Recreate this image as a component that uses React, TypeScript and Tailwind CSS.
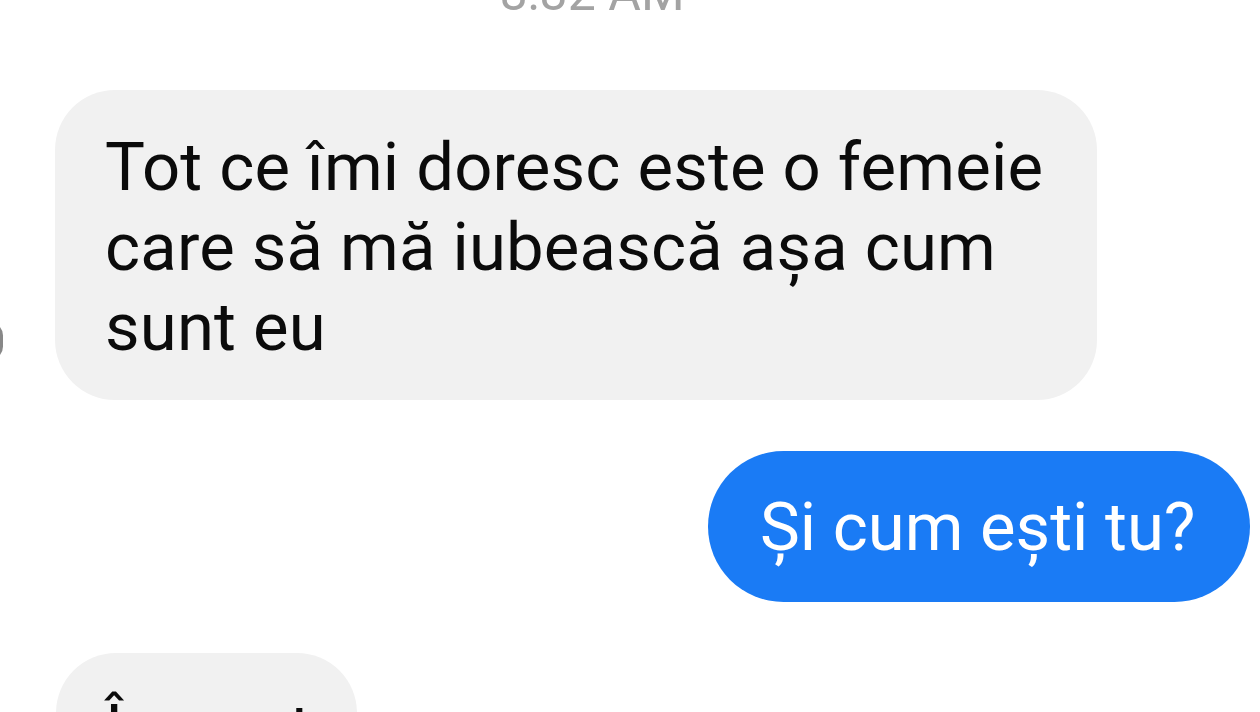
type Bubble = {
  id: number
  lines: string[]
  mine?: boolean
}

const messages: Bubble[] = [
  {
    id: 1,
    lines: ['Tot ce îmi doresc este o femeie', 'care să mă iubească așa cum', 'sunt eu'],
  },
  { id: 2, lines: ['Și cum ești tu?'], mine: true },
  { id: 3, lines: ['Însurat'] },
];

function MessageBubble({ lines, mine }: Bubble) {
  if (mine) {
    return (
      <div className="flex justify-end pr-[10px]">
        <div className="h-[151px] w-[542px] rounded-full bg-[#1a7bf5] pl-[52px] flex items-center text-white text-[67px] leading-[80px]">
          {lines[0]}
        </div>
      </div>
    );
  }
  return (
    <div className="flex pl-[55px]">
      <div className="w-[1042px] rounded-[60px] bg-[#f1f1f1] pl-[50px] pt-[37px] pb-[33px] text-[#0b0b0b] text-[67px] leading-[80px] tracking-[0.2px]">
        {lines.map((line) => (
          <span key={line} className="block whitespace-nowrap">{line}</span>
        ))}
      </div>
    </div>
  );
}

export default function App() {
  return (
    <div className="relative w-[1260px] h-[712px] overflow-hidden bg-white font-['Roboto','Liberation_Sans',sans-serif]">
      {/* cut-off avatar on the left edge */}
      <div className="absolute left-[-24px] top-[322px] h-[38px] w-[27px] rounded-full bg-[#555] opacity-70" />

      <div className="flex flex-col">
        <div className="mt-[-32px] h-[70px] text-center pr-[76px] text-[50px] leading-none text-[#a3a3a3]">
          8:32 AM
        </div>
        <div className="mt-[52px] flex flex-col gap-[51px]">
          {messages.map((m) => (
            <div key={m.id}>
              {m.id === 3 ? (
                <div className="pl-[56px]">
                  <div className="w-[301px] h-[151px] rounded-[60px] bg-[#f1f1f1] pl-[49px] pt-[36px] text-[#0b0b0b] text-[67px] leading-[80px]">
                    Însurat
                  </div>
                </div>
              ) : (
                <MessageBubble id={m.id} lines={m.lines} mine={m.mine} />
              )}
            </div>
          ))}
        </div>
      </div>
    </div>
  );
}
